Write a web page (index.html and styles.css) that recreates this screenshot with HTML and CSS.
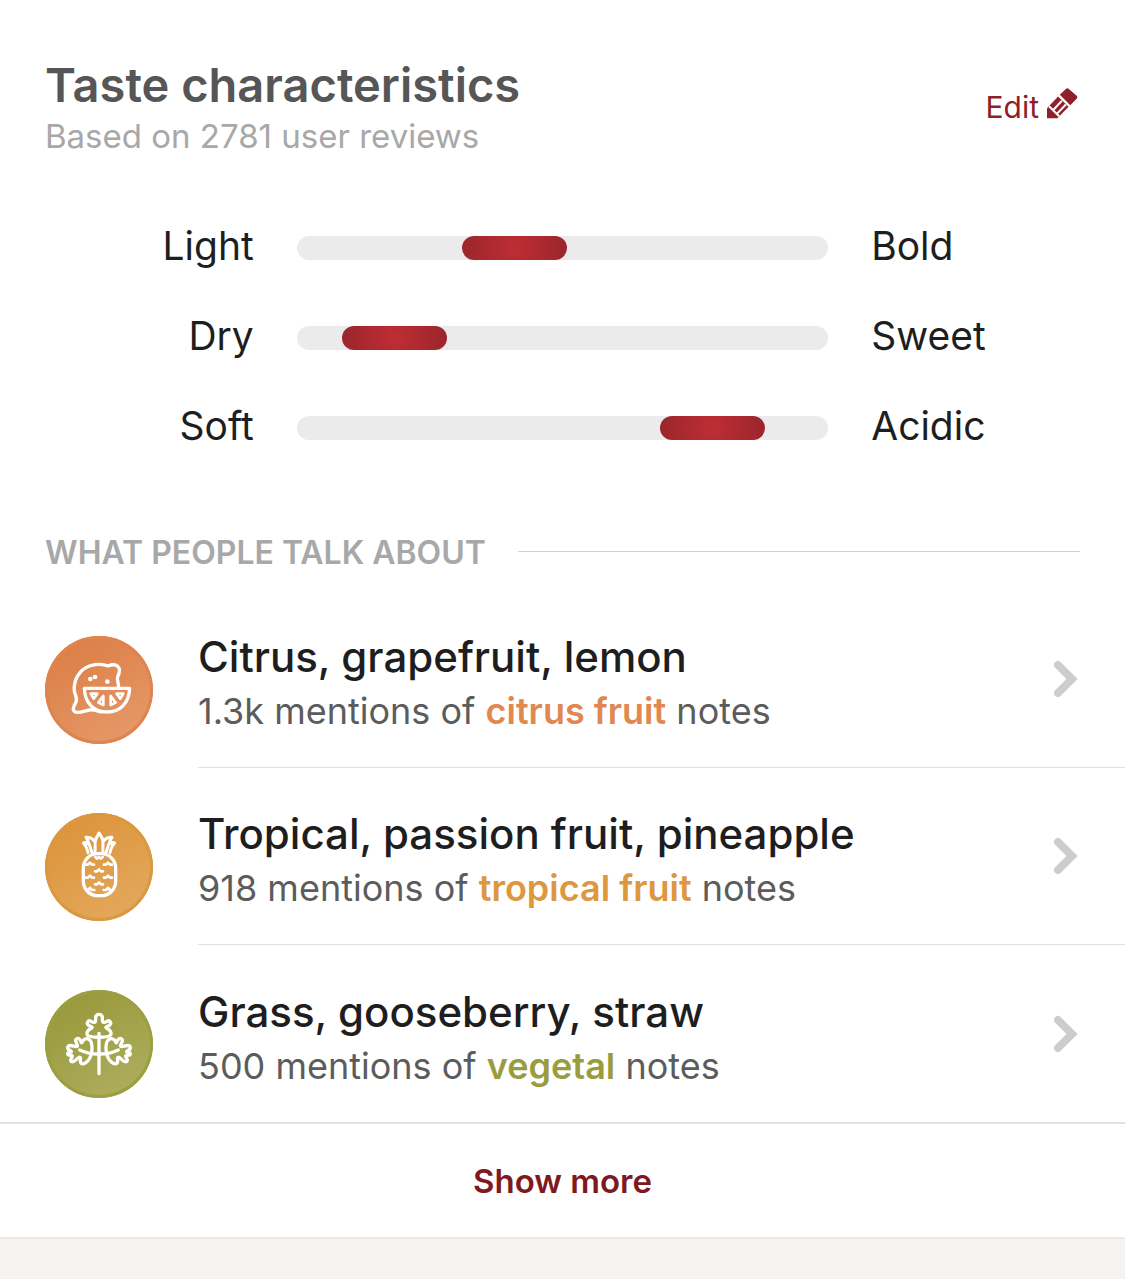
FILE: index.html
```html
<!DOCTYPE html>
<html lang="en">
<head>
  <meta charset="UTF-8">
  <meta name="viewport" content="width=device-width, initial-scale=1.0">
  <title>Taste characteristics</title>
  <link rel="stylesheet" href="styles.css">
</head>
<body>
  <main class="card">
    <header class="card-header">
      <div>
        <h1>Taste characteristics</h1>
        <p class="subtitle">Based on 2781 user reviews</p>
      </div>
      <button class="edit-btn" type="button">
        Edit
        <svg class="edit-icon" viewBox="0 0 92 92" aria-hidden="true">
          <path fill="currentColor" d="M38 20 56 3Q60-1 65 3L88 23Q92 27 88 32L69 51Z"/>
          <path fill="currentColor" d="M33 25 64 56 31 90H0V60Z"/>
          <path stroke="#fff" stroke-width="6" fill="none" d="M6 54 36 84M18 66 44 38M30 76 56 49"/>
        </svg>
      </button>
    </header>

    <section class="tastes">
      <div class="taste">
        <label class="taste-low" for="body">Light</label>
        <input type="range" id="body" min="0" max="100" step="0.1" value="38.7">
        <label for="body">Bold</label>
      </div>
      <div class="taste">
        <label class="taste-low" for="sweetness">Dry</label>
        <input type="range" id="sweetness" min="0" max="100" step="0.1" value="10.6">
        <label for="sweetness">Sweet</label>
      </div>
      <div class="taste">
        <label class="taste-low" for="acidity">Soft</label>
        <input type="range" id="acidity" min="0" max="100" step="0.1" value="85.2">
        <label for="acidity">Acidic</label>
      </div>
    </section>

    <h2>What people talk about</h2>

    <ul class="notes">
      <li>
        <a class="note citrus" href="#citrus">
          <svg class="note-icon" viewBox="15 18 324 324" aria-hidden="true">
            <path d="M133 175H269C267 220 240 246 201 246S135 220 133 175Z"/>
            <path d="M236 172C235 154 230 149 233 140C239 128 240 116 234 110C225 101 213 104 204 108C190 102 166 101 148 108C119 119 100 149 103 182C105 197 113 204 108 216C102 230 95 238 104 245C114 252 132 243 148 240C159 238 169 242 183 246"/>
            <path class="thin" d="M152 191H172L161 206ZM190 198V225L175 218ZM250 191H230L241 206ZM212 198V225L227 218Z"/>
            <g class="solid"><circle cx="151" cy="147" r="7"/><circle cx="165" cy="141" r="7"/><circle cx="202" cy="155" r="7"/></g>
          </svg>
          <div class="note-body">
            <div class="note-text">
              <h3>Citrus, grapefruit, lemon</h3>
              <p>1.3k mentions of <b>citrus fruit</b> notes</p>
            </div>
            <svg class="chevron" viewBox="0 0 24 38" aria-hidden="true"><path d="M4 5 18 19 4 33"/></svg>
          </div>
        </a>
      </li>
      <li>
        <a class="note tropical" href="#tropical">
          <svg class="note-icon" viewBox="15 18 324 324" aria-hidden="true">
            <rect x="130" y="140" width="97" height="126" rx="43"/>
            <path class="leaf" d="M165 138C167 122 163 109 167 98C169 90 174 84 177 78C180 84 186 90 188 98C191 109 187 122 189 138M165 105C159 95 148 91 138 91C145 100 151 121 156 137M189 105C195 95 206 91 216 91C209 100 203 121 198 137M144 110Q136 105 130 108Q140 118 144 137M210 110Q218 105 224 108Q214 118 210 137"/>
            <path class="scale" d="M166 150 171 155 177 150 183 155 188 150M138 173 144 173 150 167 156 173 162 173M192 173 198 173 204 167 210 173 216 173M165 193 171 193 177 187 183 193 189 193M138 212 144 212 150 206 156 212 162 212M192 212 198 212 204 206 210 212 216 212M165 232 171 232 177 226 183 232 189 232M144 249 150 243 156 249 163 249M191 249 198 249 204 243 210 249"/>
          </svg>
          <div class="note-body">
            <div class="note-text">
              <h3>Tropical, passion fruit, pineapple</h3>
              <p>918 mentions of <b>tropical fruit</b> notes</p>
            </div>
            <svg class="chevron" viewBox="0 0 24 38" aria-hidden="true"><path d="M4 5 18 19 4 33"/></svg>
          </div>
        </a>
      </li>
      <li>
        <a class="note vegetal" href="#vegetal">
          <svg class="note-icon" viewBox="15 18 324 324" aria-hidden="true">
            <path d="M177 148V269M119 198Q148 211 177 210Q206 211 235 198"/>
            <path d="M177 91C168 91 166 98 167 106C168 117 161 117 153 112C145 107 137 117 146 124C153 129 160 128 154 133C146 136 138 144 142 153C150 162 204 162 212 153C216 144 208 136 200 133C194 128 201 129 208 124C217 117 209 107 201 112C193 117 186 117 187 106C188 98 186 91 177 91Z"/>
            <path d="M148 167C139 160 130 166 127 174C123 181 124 171 119 166C113 160 104 166 108 174C113 184 116 189 105 187C96 185 85 181 83 191C83 200 94 198 94 203C94 207 83 203 83 210C84 217 96 212 97 216C97 222 88 227 94 233C101 237 108 227 115 221C123 217 122 224 121 231C122 241 131 242 139 235C150 226 156 208 156 193C156 182 154 171 148 167Z"/>
            <path d="M206 167C215 160 224 166 227 174C231 181 230 171 235 166C241 160 250 166 246 174C241 184 238 189 249 187C258 185 269 181 271 191C271 200 260 198 260 203C260 207 271 203 271 210C270 217 258 212 257 216C257 222 266 227 260 233C253 237 246 227 239 221C231 217 232 224 233 231C232 241 223 242 215 235C204 226 198 208 198 193C198 182 200 171 206 167Z"/>
          </svg>
          <div class="note-body">
            <div class="note-text">
              <h3>Grass, gooseberry, straw</h3>
              <p>500 mentions of <b>vegetal</b> notes</p>
            </div>
            <svg class="chevron" viewBox="0 0 24 38" aria-hidden="true"><path d="M4 5 18 19 4 33"/></svg>
          </div>
        </a>
      </li>
    </ul>

    <button class="show-more" type="button">Show more</button>
  </main>
</body>
</html>
```
FILE: styles.css
```css
* {
    box-sizing: border-box;
}
body {
    margin: 0;
    font-family: Inter, "Liberation Sans", sans-serif;
    background-color: #f6f2ef;
    color: #1e1e1e;
}
h1, h2, h3, p, ul {
    margin: 0;
    padding: 0;
}
button {
    border: none;
    background: none;
    font-family: inherit;
    cursor: pointer;
}
.card {
    background: #fff;
    border-bottom: 2px solid #ece8e4;
}
.card-header {
    display: flex;
    justify-content: space-between;
    align-items: center;
    padding: 56px 45px 0;
}
h1 {
    font-size: 47px;
    line-height: 58px;
    font-weight: 600;
    color: #565656;
}
.subtitle {
    font-size: 33px;
    line-height: 44px;
    color: #a8a8a8;
}
.edit-btn {
    display: flex;
    align-items: center;
    gap: 8px;
    padding: 0 2px;
    font-size: 30px;
    line-height: 40px;
    color: #8f1f28;
}
.edit-icon {
    width: 31px;
    height: 31px;
    margin-bottom: 8px;
}

/* taste sliders */
.tastes {
    padding: 45px 45px 0;
}
.taste {
    display: grid;
    grid-template-columns: 11fr 28fr 11fr;
    column-gap: 43px;
    align-items: center;
    height: 90px;
    font-size: 39px;
}
.taste label {
    padding-bottom: 5px;
}
.taste-low {
    text-align: right;
}
input[type="range"] {
    appearance: none;
    width: 100%;
    height: 24px;
    margin: 0;
    border-radius: 12px;
    background: #ebebeb;
}
input[type="range"]::-webkit-slider-thumb {
    appearance: none;
    width: 105px;
    height: 24px;
    border-radius: 12px;
    background: radial-gradient(circle, #be2e34, #9a252c);
}
input[type="range"]::-moz-range-thumb {
    width: 105px;
    height: 24px;
    border: none;
    border-radius: 12px;
    background: radial-gradient(circle, #be2e34, #9a252c);
}

h2 {
    display: flex;
    align-items: center;
    gap: 32px;
    padding: 58px 45px 0;
    font-size: 32px;
    line-height: 44px;
    font-weight: 600;
    text-transform: uppercase;
    color: #a8a8a8;
}
h2::after {
    content: "";
    flex: 1;
    height: 1px;
    margin-bottom: 4px;
    background: #d0d0d0;
}

/* notes list */
.notes {
    list-style: none;
    padding-top: 16px;
}
.note {
    display: flex;
    gap: 45px;
    padding-left: 45px;
    color: inherit;
    text-decoration: none;
}
.note-icon {
    flex: none;
    width: 108px;
    height: 108px;
    margin-top: 45px;
    border-radius: 50%;
    fill: none;
    stroke: #fff;
    stroke-width: 10;
    stroke-linecap: round;
    stroke-linejoin: round;
}
.note-icon .thin {
    stroke-width: 8;
}
.note-icon .solid {
    fill: #fff;
    stroke: none;
}
.note-icon .leaf {
    stroke-width: 9;
}
.note-icon .scale {
    stroke-width: 8;
}
.note-body {
    flex: 1;
    display: flex;
    justify-content: space-between;
    align-items: center;
    height: 177px;
    padding-right: 47px;
    border-bottom: 1px solid #e3e0dd;
}
.notes li:last-child .note-body {
    border-bottom: none;
}
.note-text {
    padding-top: 10px;
}
h3 {
    font-size: 42px;
    line-height: 55px;
    font-weight: 500;
}
.note-text p {
    font-size: 36px;
    line-height: 55px;
    color: #5c5c5c;
}
.note-text b {
    font-weight: 600;
}
.citrus b { color: #e08850; }
.tropical b { color: #dd973f; }
.vegetal b { color: #9a9d3f; }
.citrus .note-icon {
    background: linear-gradient(150deg, #dc8048 15%, #e79c6d);
    box-shadow: inset 0 0 0 3px #de854f;
}
.tropical .note-icon {
    background: linear-gradient(150deg, #dc953b 15%, #e4ab62);
    box-shadow: inset 0 0 0 3px #dc9840;
}
.vegetal .note-icon {
    background: linear-gradient(150deg, #999a3c 15%, #b0b062);
    box-shadow: inset 0 0 0 3px #9c9e42;
}
.chevron {
    width: 24px;
    height: 38px;
    fill: none;
    stroke: #cecccc;
    stroke-width: 8;
    stroke-linecap: round;
}

.show-more {
    display: block;
    width: 100%;
    height: 115px;
    border-top: 2px solid #e3e0dd;
    font-size: 33px;
    font-weight: 600;
    color: #7f1921;
}
```
